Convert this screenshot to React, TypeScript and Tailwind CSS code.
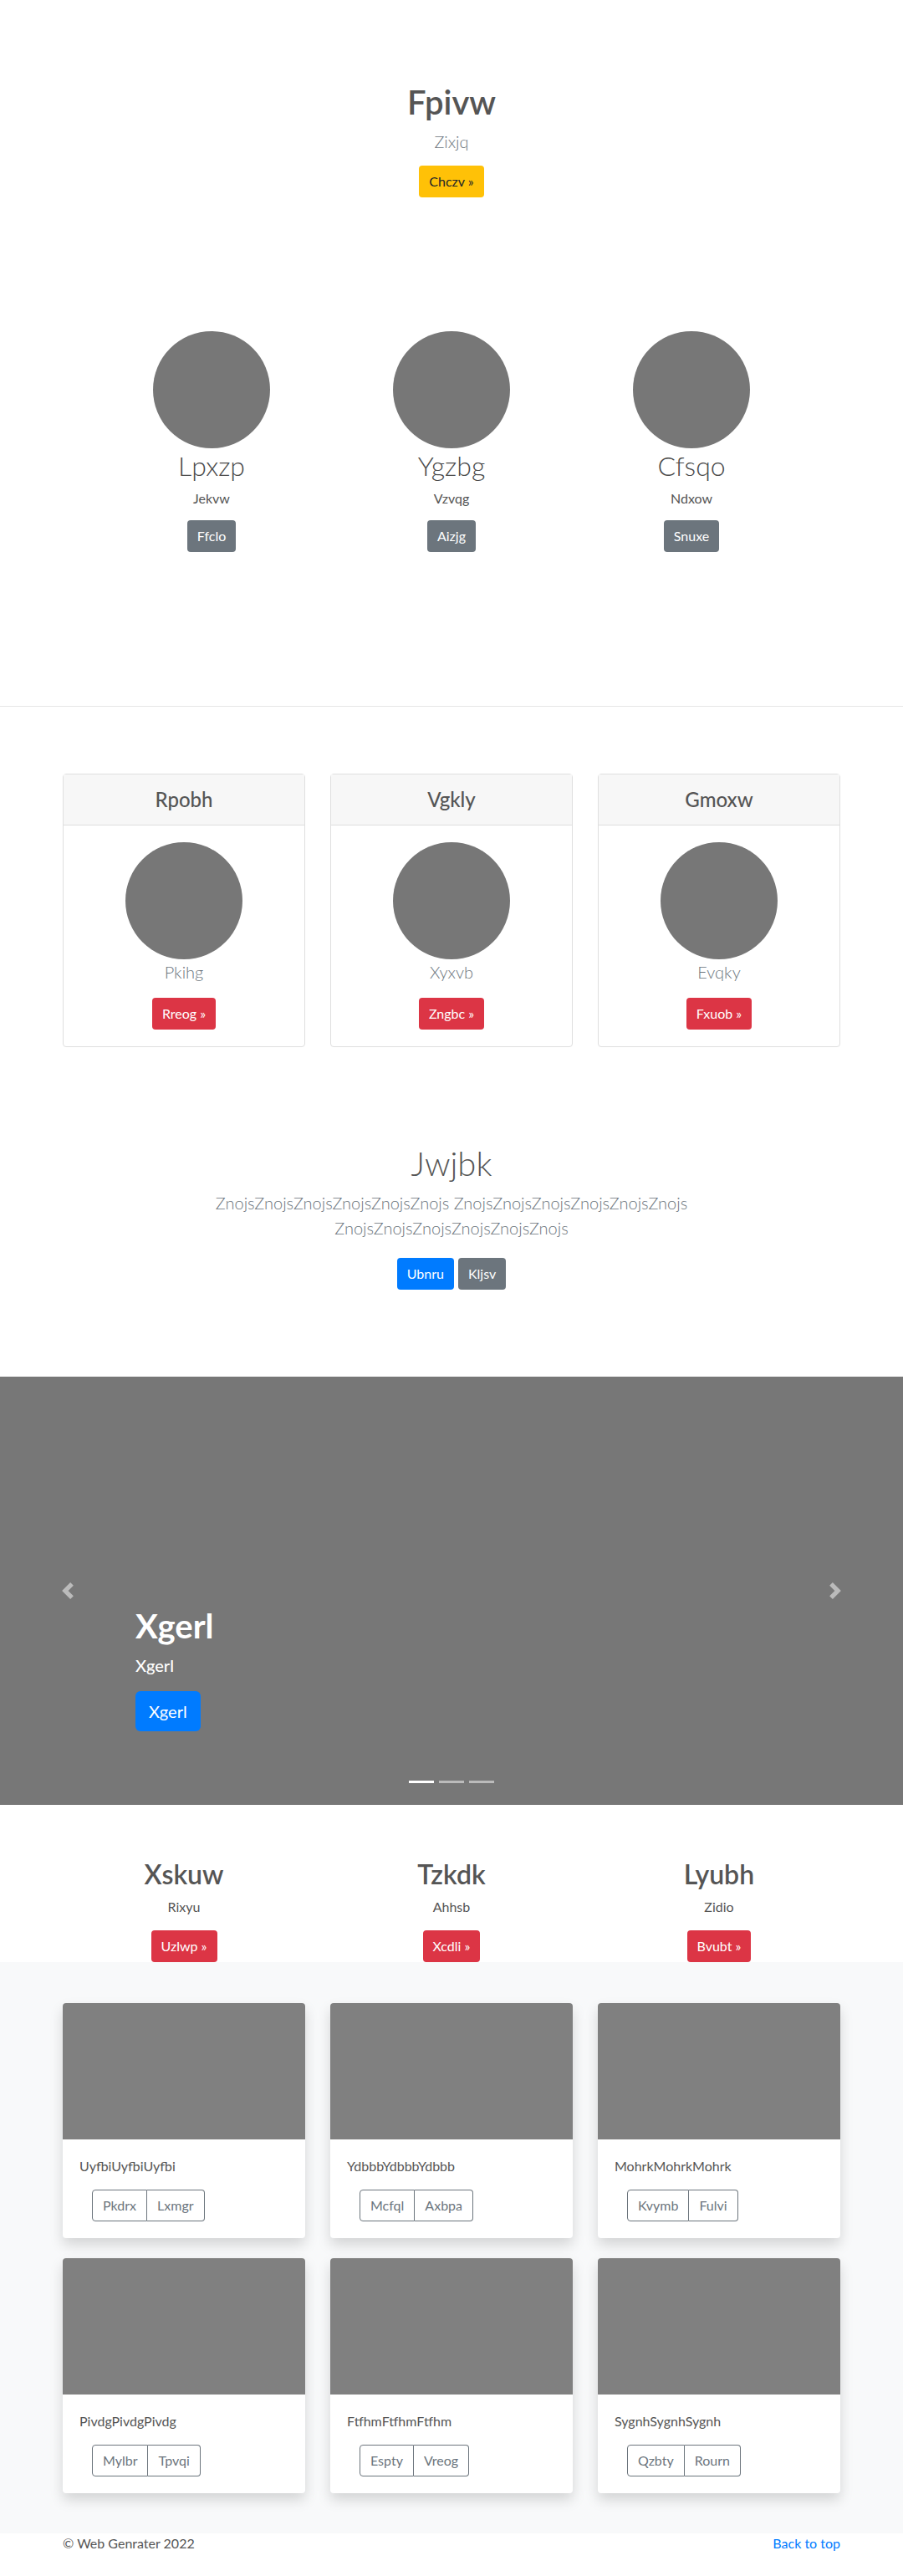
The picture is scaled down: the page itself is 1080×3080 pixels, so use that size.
const circles = [
  { name: "Lpxzp", sub: "Jekvw", btn: "Ffclo" },
  { name: "Ygzbg", sub: "Vzvqg", btn: "Aizjg" },
  { name: "Cfsqo", sub: "Ndxow", btn: "Snuxe" },
];

const profileCards = [
  { title: "Rpobh", name: "Pkihg", btn: "Rreog »" },
  { title: "Vgkly", name: "Xyxvb", btn: "Zngbc »" },
  { title: "Gmoxw", name: "Evqky", btn: "Fxuob »" },
];

const features = [
  { title: "Xskuw", sub: "Rixyu", btn: "Uzlwp »" },
  { title: "Tzkdk", sub: "Ahhsb", btn: "Xcdli »" },
  { title: "Lyubh", sub: "Zidio", btn: "Bvubt »" },
];

const album = [
  { text: "UyfbiUyfbiUyfbi", a: "Pkdrx", b: "Lxmgr" },
  { text: "YdbbbYdbbbYdbbb", a: "Mcfql", b: "Axbpa" },
  { text: "MohrkMohrkMohrk", a: "Kvymb", b: "Fulvi" },
  { text: "PivdgPivdgPivdg", a: "Mylbr", b: "Tpvqi" },
  { text: "FtfhmFtfhmFtfhm", a: "Espty", b: "Vreog" },
  { text: "SygnhSygnhSygnh", a: "Qzbty", b: "Rourn" },
];

function Btn({ label, color }: { label: string; color: string }) {
  return (
    <span
      className={`inline-block h-[38px] px-3 rounded text-base leading-[38px] ${color}`}
    >
      {label}
    </span>
  );
}

function Chevron({ dir }: { dir: "left" | "right" }) {
  return (
    <svg width="20" height="20" viewBox="0 0 8 8" className="opacity-50">
      <path
        fill="#fff"
        d={
          dir === "left"
            ? "M5.25 0l-4 4 4 4 1.5-1.5L4.25 4l2.5-2.5L5.25 0z"
            : "M2.75 0l-1.5 1.5L3.75 4l-2.5 2.5L2.75 8l4-4-4-4z"
        }
      />
    </svg>
  );
}

export default function App() {
  return (
    <div className="w-[1080px] bg-white font-[Lato,sans-serif] text-[#555]">
      {/* hero */}
      <section className="pt-[98px] pb-[160px] text-center">
        <h1 className="text-[40px] leading-[48px] font-semibold">Fpivw</h1>
        <p className="mt-2 text-xl leading-[30px] font-light text-[#6c757d]">Zixjq</p>
        <div className="mt-[14px]">
          <Btn label="Chczv »" color="bg-[#ffc107] text-[#212529]" />
        </div>
      </section>

      {/* circles */}
      <section className="w-[861px] mx-auto grid grid-cols-3 pb-[184px]">
        {circles.map((c) => (
          <div key={c.name} className="flex flex-col items-center">
            <div className="w-[140px] h-[140px] rounded-full bg-[#777]" />
            <h2 className="mt-[2px] text-[32px] leading-[38px] font-light text-[#4a4a4a]">{c.name}</h2>
            <p className="mt-2 text-base leading-6">{c.sub}</p>
            <div className="mt-[14px]">
              <Btn label={c.btn} color="bg-[#6c757d] text-white" />
            </div>
          </div>
        ))}
      </section>

      <div className="border-t border-[#e6e6e6]" />

      {/* profile cards */}
      <section className="w-[930px] mx-auto grid grid-cols-3 gap-[30px] pt-[80px]">
        {profileCards.map((c) => (
          <div key={c.title} className="border border-[#dfdfdf] rounded text-center">
            <div className="h-[61px] bg-[#f7f7f7] border-b border-[#dfdfdf] flex items-center justify-center">
              <h4 className="text-2xl font-medium">{c.title}</h4>
            </div>
            <div className="p-5 flex flex-col items-center">
              <div className="w-[140px] h-[140px] rounded-full bg-[#777]" />
              <p className="text-xl leading-[30px] font-light text-[#6c757d]">{c.name}</p>
              <div className="mt-4">
                <Btn label={c.btn} color="bg-[#dc3545] text-white" />
              </div>
            </div>
          </div>
        ))}
      </section>

      {/* intro */}
      <section className="pt-[115px] pb-[104px] text-center">
        <h1 className="text-[40px] leading-[48px] font-light">Jwjbk</h1>
        <p className="mt-2 mx-auto max-w-[640px] text-xl leading-[30px] font-light text-[#6c757d]">
          ZnojsZnojsZnojsZnojsZnojsZnojs ZnojsZnojsZnojsZnojsZnojsZnojs ZnojsZnojsZnojsZnojsZnojsZnojs
        </p>
        <div className="mt-[21px] flex justify-center gap-[5px]">
          <Btn label="Ubnru" color="bg-[#007bff] text-white" />
          <Btn label="Kljsv" color="bg-[#6c757d] text-white" />
        </div>
      </section>

      {/* carousel */}
      <section className="relative h-[512px] bg-[#777] mb-16">
        <div className="absolute left-0 top-0 bottom-0 w-[162px] flex items-center justify-center">
          <Chevron dir="left" />
        </div>
        <div className="absolute right-0 top-0 bottom-0 w-[162px] flex items-center justify-center">
          <Chevron dir="right" />
        </div>
        <div className="absolute left-[162px] bottom-[88px] text-white">
          <h1 className="text-[40px] leading-[48px] font-bold">Xgerl</h1>
          <p className="mt-2 text-xl leading-[30px] font-medium">Xgerl</p>
          <span className="mt-4 inline-block h-12 px-4 rounded-md bg-[#007bff] text-xl leading-[48px]">
            Xgerl
          </span>
        </div>
        <div className="absolute left-0 right-0 bottom-[26px] flex justify-center gap-[6px]">
          <span className="w-[30px] h-[3px] bg-white" />
          <span className="w-[30px] h-[3px] bg-white/50" />
          <span className="w-[30px] h-[3px] bg-white/50" />
        </div>
      </section>

      {/* features */}
      <section className="w-[960px] mx-auto grid grid-cols-3 text-center">
        {features.map((f) => (
          <div key={f.title}>
            <h2 className="text-[32px] leading-[38px] font-semibold">{f.title}</h2>
            <p className="mt-2 text-base leading-6">{f.sub}</p>
            <div className="mt-4">
              <Btn label={f.btn} color="bg-[#dc3545] text-white" />
            </div>
          </div>
        ))}
      </section>

      {/* album */}
      <section className="bg-[#f8f9fa] pt-[49px] pb-[48px]">
        <div className="w-[930px] mx-auto grid grid-cols-3 gap-x-[30px] gap-y-6">
          {album.map((a) => (
            <div
              key={a.text}
              className="bg-white rounded overflow-hidden shadow-[0_8px_16px_rgba(0,0,0,0.15)]"
            >
              <div className="h-[163px] bg-[#808080]" />
              <div className="p-5">
                <p className="text-base leading-6">{a.text}</p>
                <div className="mt-4 ml-[15px] inline-flex text-[#6c757d] text-base">
                  <span className="h-[38px] px-3 leading-9 border border-[#6c757d] rounded-l">
                    {a.a}
                  </span>
                  <span className="h-[38px] px-3 leading-9 border border-l-0 border-[#6c757d] rounded-r">
                    {a.b}
                  </span>
                </div>
              </div>
            </div>
          ))}
        </div>
      </section>

      {/* footer */}
      <footer className="w-[930px] mx-auto flex justify-between text-base leading-6">
        <p>© Web Genrater 2022</p>
        <a href="#" className="text-[#007bff]">
          Back to top
        </a>
      </footer>
    </div>
  );
}
